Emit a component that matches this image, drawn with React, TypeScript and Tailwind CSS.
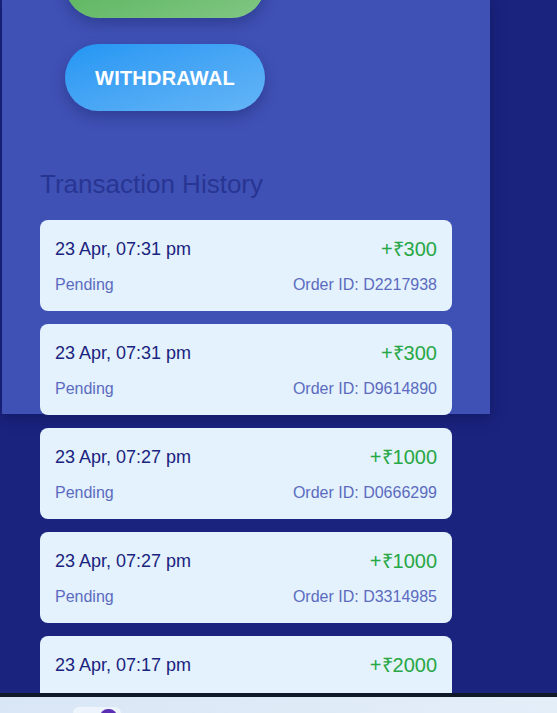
const transactions = [
  { date: "23 Apr, 07:31 pm", amount: "+₹300", order: "D2217938" },
  { date: "23 Apr, 07:31 pm", amount: "+₹300", order: "D9614890" },
  { date: "23 Apr, 07:27 pm", amount: "+₹1000", order: "D0666299" },
  { date: "23 Apr, 07:27 pm", amount: "+₹1000", order: "D3314985" },
  { date: "23 Apr, 07:17 pm", amount: "+₹2000", order: "D1178420" },
];

export default function App() {
  return (
    <div
      className="relative h-[713px] w-full overflow-hidden bg-[#1a237e]"
      style={{ fontFamily: '"Liberation Sans", Arial, sans-serif' }}
    >
      {/* Wallet panel */}
      <div className="ml-[2px] h-[414px] w-[488px] bg-[#3f51b5] shadow-[0_4px_14px_rgba(10,15,70,0.45)]">
        {/* Action buttons (deposit button scrolled mostly out of view) */}
        <div className="flex flex-col gap-[26px] pl-[63px]">
          <button
            aria-label="Deposit"
            className="-mt-[49px] h-[67px] w-[200px] rounded-full bg-gradient-to-br from-[#4caf50] to-[#81c784] shadow-[0_6px_14px_rgba(20,30,90,0.35)]"
          />
          <button className="h-[67px] w-[200px] rounded-full bg-gradient-to-br from-[#2196f3] to-[#64b5f6] text-[20px] font-bold tracking-[0.2px] text-white shadow-[0_6px_14px_rgba(20,30,90,0.35)]">
            WITHDRAWAL
          </button>
        </div>

        {/* History */}
        <div className="pl-[38px] pt-[58px]">
          <h2 className="text-[26px] leading-[30px] text-[#283593]">Transaction History</h2>
          <div className="mt-[21px] flex w-[412px] flex-col gap-[13px]">
            {transactions.map((t) => (
              <div
                key={t.order}
                className="flex h-[91px] flex-col rounded-[8px] bg-[#e3f2fd] px-[15px] pt-[16px]"
              >
                <div className="flex h-[26px] items-center justify-between">
                  <span className="text-[18px] text-[#1a237e]">{t.date}</span>
                  <span className="text-[20px] text-[#28a745]">{t.amount}</span>
                </div>
                <div className="mt-[13px] flex h-[19px] items-center justify-between text-[16px] text-[#5c6bc0]">
                  <span>Pending</span>
                  <span>Order ID: {t.order}</span>
                </div>
              </div>
            ))}
          </div>
        </div>
      </div>

      {/* Bottom navigation */}
      <div className="absolute bottom-0 left-0 h-[20px] w-full border-t-[4px] border-[#0f1729] bg-gradient-to-r from-[#d9e6f5] to-[#e4eef9]">
        <div className="absolute left-[73px] top-[10px] h-[12px] w-[48px] rounded-t-[6px] bg-[#eef4fb]" />
        <div className="absolute left-[100px] top-[12px] h-[16px] w-[17px] rounded-full bg-[#5b2fb3]" />
      </div>
    </div>
  );
}
